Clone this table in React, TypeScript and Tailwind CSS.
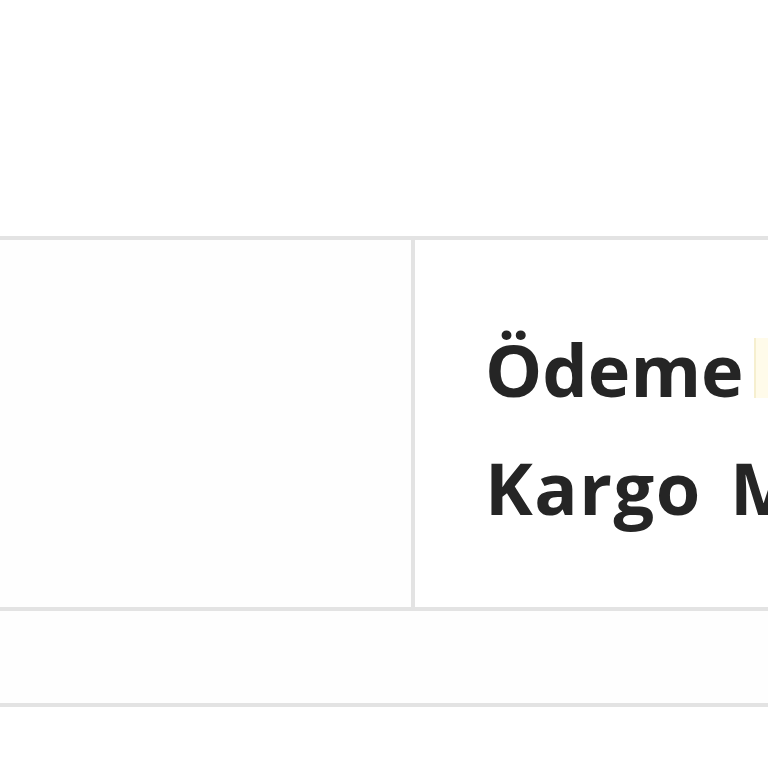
import React from "react";

export default function App() {
  return (
    <div className="w-[768px] h-[768px] overflow-hidden bg-white" style={{ fontFamily: "'Open Sans', 'Liberation Sans', sans-serif" }}>
      <div className="h-[236px]" />
      <div className="flex h-[375px] border-y-4 border-[#e3e3e3]">
        <div className="w-[415px] shrink-0 border-r-4 border-[#e3e3e3] bg-[#fefefe]" />
        <div className="flex-1 pl-[70px] pt-[70px] overflow-hidden">
          <div className="text-[72px] leading-[118px] font-bold text-[#252525] whitespace-nowrap flex items-start">
            <span>Ödeme</span>
            <span className="ml-[10px] mt-[28px] w-[24px] h-[60px] bg-[#fffbea] border-l-2 border-[#f6efcf] shrink-0" />
          </div>
          <div className="text-[72px] leading-[118px] font-bold text-[#252525] whitespace-nowrap tracking-[1.5px] [word-spacing:8px]">Kargo Masrafı</div>
        </div>
      </div>
      <div className="h-[92px] bg-[#fefefe]" />
      <div className="h-[4px] bg-[#e3e3e3]" />
    </div>
  );
}
